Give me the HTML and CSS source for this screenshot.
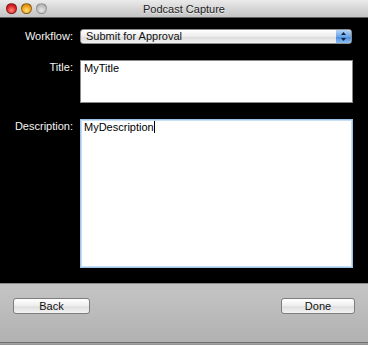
FILE: index.html
```html
<!DOCTYPE html>
<html lang="en">
<head>
    <meta charset="UTF-8">
    <title>Podcast Capture</title>
    <link rel="stylesheet" href="styles.css">
</head>
<body>
    <div class="window">
        <!-- title bar -->
        <div class="titlebar">
            <div class="lights">
                <span class="light red"></span>
                <span class="light orange"></span>
                <span class="light grey"></span>
            </div>
            <div class="title">Podcast Capture</div>
        </div>

        <!-- form -->
        <div class="content">
            <label class="label">Workflow:</label>
            <div class="popup">
                <span class="popup-text">Submit for Approval</span>
                <span class="popup-arrows">
                    <svg width="7" height="11" viewBox="0 0 7 11">
                        <path d="M3.5 1 L6 4 L1 4 Z" fill="#10213f"/>
                        <path d="M3.5 10 L6 7 L1 7 Z" fill="#10213f"/>
                    </svg>
                </span>
            </div>

            <label class="label">Title:</label>
            <div class="textbox title-box">MyTitle</div>

            <label class="label">Description:</label>
            <div class="textbox desc-box focused">MyDescription<span class="caret"></span></div>
        </div>

        <!-- bottom bar -->
        <div class="footer">
            <div class="buttons">
                <button class="button back">Back</button>
                <button class="button done">Done</button>
            </div>
            <div class="strip"></div>
        </div>
    </div>
</body>
</html>
```

FILE: styles.css
```css
body {
    margin: 0;
    padding: 0;
    background: #000;
    font-family: "Liberation Sans", Arial, sans-serif;
    font-size: 11px;
}

.window {
    width: 368px;
    height: 345px;
    display: flex;
    flex-direction: column;
    overflow: hidden;
}

/* title bar */
.titlebar {
    height: 17px;
    border-bottom: 1px solid #5e5e5e;
    background: linear-gradient(#ebebeb, #d2d2d2 60%, #c4c4c4);
    display: flex;
    align-items: center;
    position: relative;
}
.lights {
    display: flex;
    gap: 4px;
    padding-left: 6px;
}
.light {
    width: 11px;
    height: 11px;
    border-radius: 50%;
    box-sizing: border-box;
    border: 1px solid rgba(0, 0, 0, 0.35);
}
.red { background: radial-gradient(circle at 50% 70%, #ff8a7a, #e0262a 55%, #9c0f12); }
.orange { background: radial-gradient(circle at 50% 70%, #ffe27a, #f0a21c 55%, #a8640a); }
.grey { background: radial-gradient(circle at 50% 70%, #e8e8e8, #bcbcbc 60%, #9a9a9a); border-color: rgba(0, 0, 0, 0.2); }
.title {
    position: absolute;
    left: 0;
    right: 0;
    text-align: center;
    font-size: 11px;
    color: #222;
    text-shadow: 0 1px 0 rgba(255, 255, 255, 0.6);
}

/* form */
.content {
    flex: 1;
    background: #000;
    display: grid;
    grid-template-columns: 73px 1fr;
    grid-template-rows: 15px 43px 149px;
    column-gap: 7px;
    row-gap: 16px;
    padding: 11px 15px 0 0;
    align-content: start;
}
.label {
    color: #f4f4f4;
    text-align: right;
    line-height: 15px;
}
.popup {
    display: flex;
    border: 1px solid #8c8c8c;
    border-radius: 3px;
    background: linear-gradient(#ffffff, #ececec 50%, #dcdcdc 55%, #f2f2f2);
    box-sizing: border-box;
    height: 15px;
    margin-right: 1px;
    overflow: hidden;
}
.popup-text {
    flex: 1;
    padding-left: 5px;
    line-height: 13px;
    color: #111;
}
.popup-arrows {
    width: 15px;
    display: flex;
    align-items: center;
    justify-content: center;
    background: linear-gradient(#b6d4f6, #6ea6e8 50%, #4a8ee0 55%, #8cc0f4);
}
.textbox {
    background: #fff;
    border: 1px solid #8a8a8a;
    box-sizing: border-box;
    padding: 1px 3px;
    color: #000;
    line-height: 13px;
}
.focused {
    border: 1px solid #9ec3e6;
    box-shadow: inset 0 0 0 1px #c9dff3;
}
.caret {
    display: inline-block;
    width: 1px;
    height: 12px;
    background: #000;
    vertical-align: -2px;
}

/* bottom bar */
.footer {
    height: 62px;
    background: linear-gradient(#c5c5c5, #b0b0b0);
    border-top: 1px solid #8a8a8a;
    box-sizing: border-box;
    display: flex;
    flex-direction: column;
}
.buttons {
    display: flex;
    justify-content: space-between;
    padding: 14px 13px 0 13px;
    height: 30px;
}
.button {
    height: 16px;
    padding: 0;
    border: 1px solid #7d7d7d;
    border-radius: 3px;
    background: linear-gradient(#ffffff, #ededed 50%, #dedede 55%, #f3f3f3);
    font-family: "Liberation Sans", Arial, sans-serif;
    font-size: 11px;
    color: #111;
    line-height: 14px;
}
.back { width: 77px; }
.done { width: 74px; }
.strip {
    flex: 1;
    margin-top: 14px;
    border-top: 1px solid #6f6f6f;
    background: linear-gradient(#a6a6a6, #8e8e8e);
}
```
